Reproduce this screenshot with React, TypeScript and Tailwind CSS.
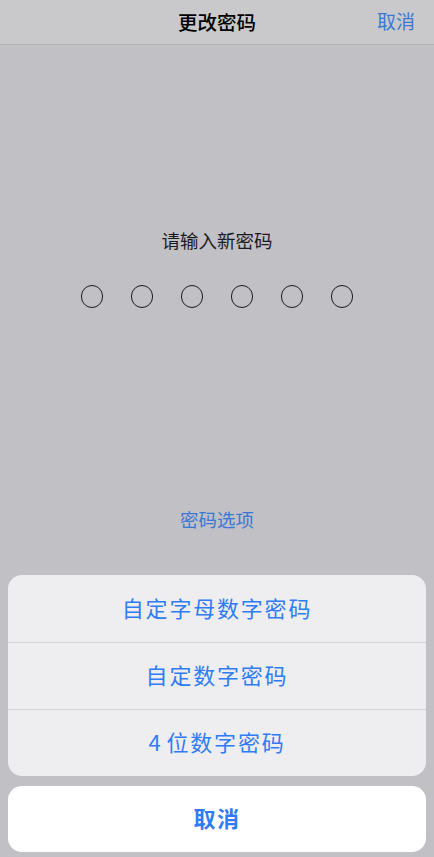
const font = { fontFamily: '"Noto Sans CJK SC", "Noto Sans", sans-serif' };

const sheetOptions = ['自定字母数字密码', '自定数字密码', '4位数字密码'];

export default function App() {
  return (
    <div className="flex h-[857px] w-[434px] flex-col bg-[#c1c0c5]" style={font}>
      {/* Nav bar */}
      <header className="relative flex h-[45px] shrink-0 items-center justify-center border-b border-[#b3b3b6] bg-[#c9c9cb]">
        <h1 className="text-[19.5px] font-medium text-black">更改密码</h1>
        <button className="absolute right-[19px] top-[7px] text-[19px] text-[#3b78d4]">取消</button>
      </header>

      {/* Passcode entry */}
      <div className="flex flex-col items-center pt-[183px]">
        <p className="text-[18.5px] leading-[24px] text-[#1c1c1e]">请输入新密码</p>
        <div className="mt-[33px] flex gap-[28px]">
          {Array.from({ length: 6 }).map((_, i) => (
            <span key={i} className="h-[23px] w-[22px] rounded-full border-[1.5px] border-[#1c1c1e]" />
          ))}
        </div>
        <p className="mt-[199px] text-[18.5px] leading-[24px] text-[#3b78d4]">密码选项</p>
      </div>

      {/* Action sheet */}
      <div className="mt-auto flex flex-col gap-[10px] px-[8px] pb-[5px]">
        <div className="flex flex-col overflow-hidden rounded-[14px] bg-[#eeeef0]">
          {sheetOptions.map((opt, i) => (
            <button
              key={opt}
              className={`flex h-[67px] items-center justify-center pb-[3px] text-[22px] tracking-[1.8px] text-[#2f7cf6] ${
                i > 0 ? 'border-t border-[#d3d3d7]' : ''
              }`}
            >
              {opt.startsWith('4') ? (
                <>
                  <span className="mr-[4px]">4</span>
                  {opt.slice(1)}
                </>
              ) : (
                opt
              )}
            </button>
          ))}
        </div>
        <button className="flex h-[66px] items-center justify-center rounded-[14px] bg-white pb-[3px] text-[22px] font-semibold tracking-[1.5px] text-[#2f7cf6]">
          取消
        </button>
      </div>
    </div>
  );
}
